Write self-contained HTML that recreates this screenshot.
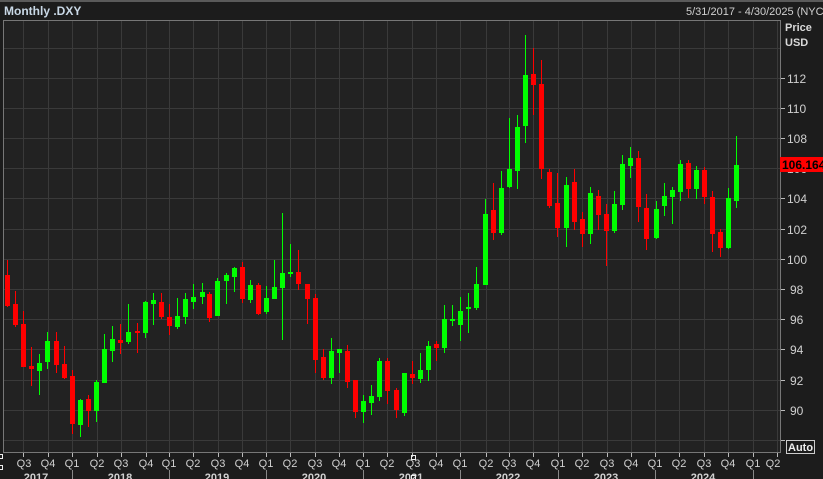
<!DOCTYPE html>
<html><head><meta charset="utf-8"><style>
html,body{margin:0;padding:0;background:#1c1c1c;}
body{width:823px;height:479px;overflow:hidden;position:relative;font-family:"Liberation Sans",sans-serif;}
svg{position:absolute;left:0;top:0;}
text{font-family:"Liberation Sans",sans-serif;}
</style></head><body>
<svg width="823" height="479" viewBox="0 0 823 479">
<rect x="0" y="0" width="823" height="479" fill="#1c1c1c"/>
<rect x="0" y="0" width="823" height="2" fill="#5a5a5a"/>
<rect x="3" y="20" width="777" height="432" fill="#222222"/>
<g stroke="#3a3a3a" stroke-width="1">
<path d="M3 48.5H780M3 78.5H780M3 108.5H780M3 138.5H780M3 168.5H780M3 198.5H780M3 229.5H780M3 259.5H780M3 289.5H780M3 319.5H780M3 349.5H780M3 380.5H780M3 410.5H780M3 440.5H780"/>
<path d="M23.5 20V452M48.5 20V452M72.5 20V452M97.5 20V452M121.5 20V452M146.5 20V452M169.5 20V452M193.5 20V452M218.5 20V452M242.5 20V452M266.5 20V452M290.5 20V452M315.5 20V452M339.5 20V452M363.5 20V452M387.5 20V452M412.5 20V452M436.5 20V452M460.5 20V452M486.5 20V452M509.5 20V452M533.5 20V452M558.5 20V452M582.5 20V452M607.5 20V452M631.5 20V452M655.5 20V452M679.5 20V452M704.5 20V452M728.5 20V452M753.5 20V452M777.5 20V452"/>
</g>
<path d="M3.5 20V452M3 20.5H780M780.5 20V453M3 452.5H781" stroke="#777" stroke-width="1" fill="none"/>
<g stroke="#00ff00" stroke-width="1" fill="none">
<path d="M39.5 354V395M47.5 332V369M80.5 399V437M96.5 380V422M104.5 334V383M112.5 326V362M128.5 304V344M145.5 301V338M153.5 293V325M177.5 298V329M185.5 293V324M193.5 284V309M202.5 283V304M217.5 278V316M226.5 273V304M234.5 267V292M250.5 280V303M266.5 286V314M274.5 260V299M282.5 213V340M290.5 244V277M331.5 338V384M339.5 349V373M363.5 395V423M371.5 385V415M379.5 358V401M404.5 373V416M420.5 353V383M428.5 341V381M444.5 305V353M452.5 305V326M460.5 297V341M468.5 293V333M476.5 267V310M485.5 199V285M501.5 171V235M509.5 118V188M517.5 115V189M525.5 35V143M566.5 177V247M590.5 187V244M614.5 191V233M622.5 155V210M630.5 147V178M656.5 201V239M664.5 183V216M672.5 187V224M680.5 160V201M696.5 166V199M728.5 188V249M736.5 136V208"/>
</g>
<g stroke="#ff0000" stroke-width="1" fill="none">
<path d="M7.5 260V307M15.5 291V327M23.5 311V367M31.5 347V386M56.5 332V373M64.5 346V379M72.5 370V434M88.5 395V427M120.5 324V354M137.5 323V353M161.5 293V319M169.5 304V335M209.5 292V322M242.5 262V303M258.5 283V315M298.5 250V290M307.5 284V324M315.5 294V373M323.5 349V380M347.5 345V388M355.5 380V418M387.5 358V404M396.5 388V418M412.5 361V384M436.5 341V361M493.5 183V240M533.5 48V115M541.5 60V179M549.5 169V208M557.5 173V237M574.5 169V230M582.5 212V247M598.5 190V230M606.5 204V266M638.5 151V222M646.5 194V250M688.5 160V198M704.5 167V204M712.5 191V252M720.5 229V257"/>
</g>
<g fill="#00ff00">
<rect x="37" y="363" width="5" height="8"/><rect x="45" y="341" width="5" height="21"/><rect x="78" y="400" width="5" height="25"/><rect x="94" y="382" width="5" height="29"/><rect x="102" y="349" width="5" height="34"/><rect x="110" y="339" width="5" height="12"/><rect x="126" y="332" width="5" height="10"/><rect x="143" y="302" width="5" height="31"/><rect x="151" y="300" width="5" height="4"/><rect x="175" y="316" width="5" height="11"/><rect x="183" y="299" width="5" height="18"/><rect x="191" y="297" width="5" height="5"/><rect x="200" y="292" width="5" height="5"/><rect x="215" y="281" width="5" height="35"/><rect x="224" y="275" width="5" height="6"/><rect x="232" y="268" width="5" height="9"/><rect x="248" y="285" width="5" height="15"/><rect x="264" y="298" width="5" height="14"/><rect x="272" y="287" width="5" height="12"/><rect x="280" y="273" width="5" height="15"/><rect x="288" y="272" width="5" height="2"/><rect x="329" y="351" width="5" height="27"/><rect x="337" y="349" width="5" height="4"/><rect x="361" y="401" width="5" height="11"/><rect x="369" y="396" width="5" height="7"/><rect x="377" y="361" width="5" height="36"/><rect x="402" y="373" width="5" height="40"/><rect x="418" y="370" width="5" height="9"/><rect x="426" y="346" width="5" height="24"/><rect x="442" y="319" width="5" height="29"/><rect x="450" y="319" width="5" height="2"/><rect x="458" y="311" width="5" height="14"/><rect x="466" y="307" width="5" height="2"/><rect x="474" y="284" width="5" height="24"/><rect x="483" y="214" width="5" height="71"/><rect x="499" y="188" width="5" height="45"/><rect x="507" y="169" width="5" height="18"/><rect x="515" y="127" width="5" height="44"/><rect x="523" y="75" width="5" height="51"/><rect x="564" y="185" width="5" height="43"/><rect x="588" y="193" width="5" height="41"/><rect x="612" y="204" width="5" height="27"/><rect x="620" y="164" width="5" height="41"/><rect x="628" y="158" width="5" height="8"/><rect x="654" y="209" width="5" height="29"/><rect x="662" y="196" width="5" height="10"/><rect x="670" y="190" width="5" height="7"/><rect x="678" y="164" width="5" height="28"/><rect x="694" y="170" width="5" height="19"/><rect x="726" y="198" width="5" height="50"/><rect x="734" y="165" width="5" height="36"/>
</g>
<g fill="#ff0000">
<rect x="5" y="275" width="5" height="31"/><rect x="13" y="304" width="5" height="21"/><rect x="21" y="324" width="5" height="43"/><rect x="29" y="366" width="5" height="3"/><rect x="54" y="341" width="5" height="24"/><rect x="62" y="364" width="5" height="14"/><rect x="70" y="376" width="5" height="48"/><rect x="86" y="399" width="5" height="12"/><rect x="118" y="340" width="5" height="3"/><rect x="135" y="331" width="5" height="2"/><rect x="159" y="302" width="5" height="15"/><rect x="167" y="317" width="5" height="9"/><rect x="207" y="294" width="5" height="24"/><rect x="240" y="267" width="5" height="32"/><rect x="256" y="285" width="5" height="29"/><rect x="296" y="272" width="5" height="12"/><rect x="305" y="284" width="5" height="15"/><rect x="313" y="298" width="5" height="62"/><rect x="321" y="357" width="5" height="21"/><rect x="345" y="351" width="5" height="31"/><rect x="353" y="380" width="5" height="32"/><rect x="385" y="361" width="5" height="30"/><rect x="394" y="390" width="5" height="20"/><rect x="410" y="374" width="5" height="4"/><rect x="434" y="344" width="5" height="4"/><rect x="491" y="210" width="5" height="23"/><rect x="531" y="74" width="5" height="11"/><rect x="539" y="84" width="5" height="85"/><rect x="547" y="172" width="5" height="34"/><rect x="555" y="203" width="5" height="25"/><rect x="572" y="182" width="5" height="40"/><rect x="580" y="219" width="5" height="15"/><rect x="596" y="196" width="5" height="19"/><rect x="604" y="214" width="5" height="17"/><rect x="636" y="158" width="5" height="49"/><rect x="644" y="208" width="5" height="31"/><rect x="686" y="163" width="5" height="26"/><rect x="702" y="170" width="5" height="27"/><rect x="710" y="197" width="5" height="37"/><rect x="718" y="232" width="5" height="16"/>
</g>
<!-- right axis -->
<g stroke="#bbb" stroke-width="1"><path d="M781 78.5h4M781 108.5h4M781 138.5h4M781 198.5h4M781 229.5h4M781 259.5h4M781 289.5h4M781 319.5h4M781 349.5h4M781 380.5h4M781 410.5h4M781 440.5h4"/></g>
<g fill="#d0d0d0" font-size="12">
<text x="787" y="83">112</text><text x="787" y="113">110</text><text x="787" y="143">108</text><text x="787" y="173">106</text><text x="787" y="203">104</text><text x="787" y="234">102</text><text x="787" y="264">100</text><text x="790" y="294">98</text><text x="790" y="324">96</text><text x="790" y="354">94</text><text x="790" y="385">92</text><text x="790" y="415">90</text>
</g>
<text x="785" y="31" fill="#d8d8d8" font-size="11" font-weight="bold">Price</text>
<text x="785" y="46" fill="#d8d8d8" font-size="11" font-weight="bold">USD</text>
<rect x="780" y="157" width="43" height="15" fill="#ff0000"/>
<text x="782" y="169" fill="#000" font-size="12" font-weight="bold">106.164</text>
<rect x="786.5" y="440.5" width="28" height="13" fill="none" stroke="#ccc"/>
<text x="788" y="451" fill="#eee" font-size="11" font-weight="bold">Auto</text>
<!-- top -->
<text x="4" y="15" fill="#c9d8e6" font-size="12" font-weight="bold">Monthly .DXY</text>
<text x="686" y="15" fill="#d0d0d0" font-size="11">5/31/2017 - 4/30/2025 (NYC</text>
<!-- bottom axis -->
<g stroke="#bbb" stroke-width="1"><path d="M23.5 453v4M48.5 453v4M72.5 453v4M97.5 453v4M121.5 453v4M146.5 453v4M169.5 453v4M193.5 453v4M218.5 453v4M242.5 453v4M266.5 453v4M290.5 453v4M315.5 453v4M339.5 453v4M363.5 453v4M387.5 453v4M412.5 453v4M436.5 453v4M460.5 453v4M486.5 453v4M509.5 453v4M533.5 453v4M558.5 453v4M582.5 453v4M607.5 453v4M631.5 453v4M655.5 453v4M679.5 453v4M704.5 453v4M728.5 453v4M753.5 453v4M777.5 453v4"/>
<path d="M72.5 470v9M169.5 470v9M266.5 470v9M363.5 470v9M460.5 470v9M558.5 470v9M655.5 470v9M753.5 470v9" stroke="#888"/></g>
<g fill="#d0d0d0" font-size="11" text-anchor="middle">
<text x="24" y="467">Q3</text><text x="48" y="467">Q4</text><text x="72" y="467">Q1</text><text x="97" y="467">Q2</text><text x="121" y="467">Q3</text><text x="146" y="467">Q4</text><text x="169" y="467">Q1</text><text x="193" y="467">Q2</text><text x="218" y="467">Q3</text><text x="242" y="467">Q4</text><text x="266" y="467">Q1</text><text x="290" y="467">Q2</text><text x="315" y="467">Q3</text><text x="339" y="467">Q4</text><text x="363" y="467">Q1</text><text x="387" y="467">Q2</text><text x="413" y="467">Q3</text><text x="436" y="467">Q4</text><text x="460" y="467">Q1</text><text x="486" y="467">Q2</text><text x="509" y="467">Q3</text><text x="533" y="467">Q4</text><text x="558" y="467">Q1</text><text x="582" y="467">Q2</text><text x="607" y="467">Q3</text><text x="631" y="467">Q4</text><text x="655" y="467">Q1</text><text x="679" y="467">Q2</text><text x="704" y="467">Q3</text><text x="728" y="467">Q4</text><text x="753" y="467">Q1</text><text x="773" y="467">Q2</text>
</g>
<g fill="#d0d0d0" font-size="11" font-weight="bold" text-anchor="middle">
<text x="36" y="481">2017</text><text x="120" y="481">2018</text><text x="217" y="481">2019</text><text x="314" y="481">2020</text><text x="411" y="481">2021</text><text x="508" y="481">2022</text><text x="606" y="481">2023</text><text x="703" y="481">2024</text>
</g>
<g fill="none" stroke="#eee" stroke-width="1">
<rect x="-1.5" y="454.5" width="4" height="4"/><rect x="-1.5" y="465.5" width="4" height="4"/><rect x="411.5" y="455.5" width="4" height="4"/><rect x="411.5" y="475.5" width="4" height="4"/>
</g>
</svg>
</body></html>
